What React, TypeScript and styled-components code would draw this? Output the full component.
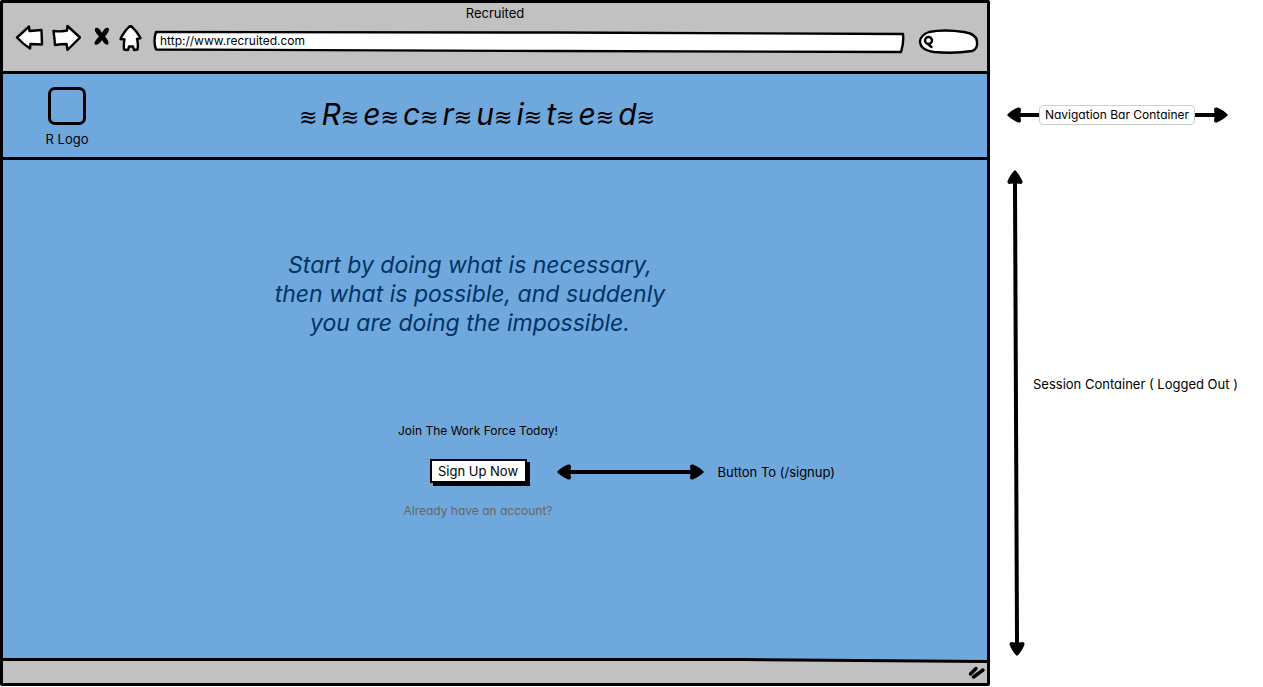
import React from "react";
import styled, { createGlobalStyle } from "styled-components";

const GlobalStyle = createGlobalStyle`
  * { box-sizing: border-box; }
  body {
    margin: 0;
    background: #fff;
    color: #000;
    font-family: Inter, "Liberation Sans", sans-serif;
    font-feature-settings: "cv11";
    font-size: 13px;
    line-height: 20px;
  }
`;

const Page = styled.div`
  display: grid;
  grid-template-columns: minmax(0, 1fr) 273px;
  min-height: 100vh;
`;

const BrowserWindow = styled.section`
  display: flex;
  flex-direction: column;
  margin-bottom: 1px;
  border: 3px solid #000;
  border-radius: 2px;
  background: #6fa8dc;
`;

const Chrome = styled.header`
  height: 71px;
  background: #c1c1c1;
  border-bottom: 3px solid #000;
`;

const WindowTitle = styled.div`
  text-align: center;
`;

const Toolbar = styled.div`
  display: flex;
  align-items: center;
  padding: 0 9px 0 12px;
`;

const IconButton = styled.button<{ $gap: number }>`
  display: flex;
  padding: 0;
  margin-right: ${(p) => p.$gap}px;
  border: 0;
  background: none;
  cursor: pointer;
`;

const Field = styled.div<{ $width?: number }>`
  position: relative;
  display: flex;
  height: 26px;
  margin-top: 6px;
  flex: ${(p) => (p.$width ? `0 0 ${p.$width}px` : "1 1 0")};
`;

const FieldFrame = styled.svg`
  position: absolute;
  inset: 0;
  width: 100%;
  height: 100%;
  overflow: visible;
`;

const FieldInput = styled.input<{ $indent: number }>`
  position: relative;
  width: 100%;
  min-width: 0;
  height: 22px;
  padding: 0 8px 0 ${(p) => p.$indent}px;
  border: 0;
  outline: 0;
  background: none;
  color: #000;
  font: inherit;
  font-size: 12px;
  font-feature-settings: inherit;
`;

const NavBar = styled.nav`
  display: flex;
  align-items: center;
  height: 86px;
  padding: 4px 124px 0 40px;
  border-bottom: 3px solid #000;
`;

const Logo = styled.a`
  display: flex;
  flex-direction: column;
  align-items: center;
  gap: 4px;
  width: 48px;
  color: #000;
  text-decoration: none;
  white-space: nowrap;
`;

const LogoBox = styled.span`
  width: 38px;
  height: 38px;
  border: 3px solid #000;
  border-radius: 7px;
`;

const Brand = styled.h1`
  flex: 1;
  margin: 0 0 8px;
  text-align: center;
  font-size: 30px;
  font-weight: 400;
  font-style: italic;
  line-height: 40px;
  white-space: nowrap;
`;

const Wave = styled.span`
  margin-right: 4px;
  font-family: "DejaVu Sans", sans-serif;
  font-size: 22px;
  font-style: normal;
  line-height: 20px;

  &:last-child {
    margin-right: 0;
  }
`;

const Main = styled.main`
  display: flex;
  flex: 1;
  flex-direction: column;
  align-items: center;
  padding: 91px 34px 40px 0;
`;

const Quote = styled.blockquote`
  margin: 0 16px 83px 0;
  color: #003366;
  font-size: 23px;
  font-style: italic;
  line-height: 29px;
  text-align: center;
`;

const Lead = styled.p`
  margin: 0 0 18px;
  font-size: 12px;
`;

const SignUpRow = styled.div`
  display: grid;
  grid-template-columns: 1fr auto 1fr;
  align-items: center;
  width: 100%;
  margin-bottom: 16px;
`;

const SignUpButton = styled.button`
  grid-column: 2;
  width: 97px;
  height: 24px;
  margin-bottom: 2px;
  padding: 0;
  border: 2px solid #000;
  background: #fff;
  box-shadow: 3px 3px 0 #000;
  color: #000;
  font: inherit;
  font-feature-settings: inherit;
  cursor: pointer;
`;

const Note = styled.div`
  display: flex;
  align-items: center;
  gap: 14px;
  padding-left: 30px;
  white-space: nowrap;
`;

const LoginLink = styled.a`
  color: #666;
  font-size: 12px;
  text-decoration: none;
`;

const StatusBar = styled.footer`
  position: relative;
  display: flex;
  justify-content: flex-end;
  align-items: center;
  height: 24px;
  padding: 4px 1px 0 0;
  background: #c1c1c1;
`;

const StatusEdge = styled.svg`
  position: absolute;
  left: 0;
  top: -2px;
  width: 100%;
  height: 8px;
`;

const Annotations = styled.aside`
  display: flex;
  flex-direction: column;
  padding: 0 35px 31px 17px;
  white-space: nowrap;
`;

const NavNote = styled.div`
  display: flex;
  align-items: center;
  margin: 105px 0 45px;
`;

const NavLabel = styled.span`
  width: 156px;
  height: 20px;
  border: 1px solid #ccc;
  border-radius: 4px;
  font-size: 12px;
  line-height: 18px;
  text-align: center;
`;

const SessionNote = styled.div`
  display: flex;
  flex: 1;
  gap: 8px;
`;

const SessionLabel = styled.span`
  align-self: center;
  padding-bottom: 58px;
`;

const ArrowBox = styled.span<{ $vertical?: boolean; $length?: number }>`
  display: flex;
  flex-direction: ${(p) => (p.$vertical ? "column" : "row")};
  flex: ${(p) => (p.$length ? `0 0 ${p.$length}px` : p.$vertical ? "none" : "1")};

  & > :last-child {
    align-self: flex-end;
  }
`;

const Shaft = styled.svg<{ $vertical?: boolean }>`
  flex: 1;
  min-width: 0;
  min-height: 0;
  width: ${(p) => (p.$vertical ? "18px" : "auto")};
  height: ${(p) => (p.$vertical ? "auto" : "16px")};
`;

const turns = { left: 0, up: 90, right: 180, down: 270 };

function Head({ to }: { to: keyof typeof turns }) {
  return (
    <svg width="16" height="16" viewBox="0 0 16 16" aria-hidden="true">
      <g transform={`rotate(${turns[to]} 8 8)`}>
        <path d="M0 8Q4 3.500 11 .6Q13.500 0 14 2L13.500 6H16V10H13.500L14 14Q13.500 16 11 15.400Q4 12.500 0 8Z" />
      </g>
    </svg>
  );
}

function Arrow({ vertical, length, start = true, end = true }: {
  vertical?: boolean; length?: number; start?: boolean; end?: boolean;
}) {
  return (
    <ArrowBox $vertical={vertical} $length={length}>
      {start && <Head to={vertical ? "up" : "left"} />}
      <Shaft
        $vertical={vertical}
        viewBox={vertical ? "0 0 18 16" : "0 0 16 16"}
        preserveAspectRatio="none"
        aria-hidden="true"
      >
        {vertical
          ? <path d="M6 0H10L12 16H8Z" />
          : <path d="M0 6H16V10H0Z" />}
      </Shaft>
      {end && <Head to={vertical ? "down" : "right"} />}
    </ArrowBox>
  );
}

const sketch = {
  fill: "#fff",
  stroke: "#000",
  strokeWidth: 2.4,
  strokeLinejoin: "round" as const,
  strokeLinecap: "round" as const,
};

export default function App() {
  return (
    <>
      <GlobalStyle />
      <Page>
        <BrowserWindow>
          <Chrome>
            <WindowTitle>Recruited</WindowTitle>
            <Toolbar>
              <IconButton $gap={8} aria-label="Back">
                <svg width="29" height="28" viewBox="0 0 29 28" {...sketch}>
                  <path d="M2 12.500L14 1.500L14.500 6L26.500 5L27 19.500L15.500 19L15 23.500Q8 19 2 12.500Z" />
                </svg>
              </IconButton>
              <IconButton $gap={12} aria-label="Forward">
                <svg width="29" height="28" viewBox="0 0 29 28" {...sketch}>
                  <path d="M1.500 6Q7 7 15 5.500L15.500 1L28 12.500L15.500 25L14.500 19Q9 19 3 20Q2.500 13 1.500 6Z" />
                </svg>
              </IconButton>
              <IconButton $gap={8} aria-label="Stop">
                <svg width="18" height="28" viewBox="0 0 18 28" fill="#000">
                  <path d="M2.500 3Q6 2 9 8Q12 1.500 15.500 3Q17.500 5 12 11.500Q17 17 15 19.500Q12 20.500 9 15Q5 21 2 19.500Q0 17.500 6 11.500Q0 5 2.500 3Z" />
                </svg>
              </IconButton>
              <IconButton $gap={10} aria-label="Home">
                <svg width="24" height="28" viewBox="0 0 24 28" {...sketch}>
                  <path d="M11.500 .5Q18 6 21.500 13L18 14Q19.500 19 18.500 24.500L15 25L14 21.500H10L9 25L5 24.500Q4.500 19 5.500 14.500L1.500 14Q5 6 11.500 .5Z" />
                </svg>
              </IconButton>
              <Field>
                <FieldFrame viewBox="0 0 750 26" preserveAspectRatio="none" aria-hidden="true" {...sketch}>
                  <path vectorEffect="non-scaling-stroke" d="M3 3L400 3.500L749 5Q750 14 747 23L400 22L3 20.500Q0 12 3 3Z" />
                </FieldFrame>
                <FieldInput $indent={7} aria-label="Address" defaultValue="http://www.recruited.com" />
              </Field>
              <Field $width={74}>
                <FieldFrame viewBox="-15 0 74 26" aria-hidden="true" {...sketch}>
                  <path d="M10 3Q25 0 45 3Q58 5 58 13Q59 20 53 22Q35 25 15 23Q1 21 1 12Q2 6 10 3Z" />
                  <circle cx="9.500" cy="11.500" r="3.500" />
                  <path d="M9 15L12.500 18" />
                </FieldFrame>
                <FieldInput $indent={30} type="search" aria-label="Search" />
              </Field>
            </Toolbar>
          </Chrome>
          <NavBar>
            <Logo href="#">
              <LogoBox />
              R Logo
            </Logo>
            <Brand aria-label="Recruited">
              <Wave>≋</Wave>
              {"Recruited".split("").map((letter, i) => (
                <React.Fragment key={i}>
                  {letter}
                  <Wave>≋</Wave>
                </React.Fragment>
              ))}
            </Brand>
          </NavBar>
          <Main>
            <Quote>
              Start by doing what is necessary,<br />
              then what is possible, and suddenly<br />
              you are doing the impossible.
            </Quote>
            <Lead>Join The Work Force Today!</Lead>
            <SignUpRow>
              <SignUpButton>Sign Up Now</SignUpButton>
              <Note>
                <Arrow length={147} />
                <span>Button To (/signup)</span>
              </Note>
            </SignUpRow>
            <LoginLink href="#">Already have an account?</LoginLink>
          </Main>
          <StatusBar>
            <StatusEdge viewBox="0 0 984 8" preserveAspectRatio="none" aria-hidden="true">
              <path fill="#6fa8dc" d="M0 0H984V5L740 3H0Z" />
              <path d="M0 1H740L984 3V6L740 4H0Z" />
            </StatusEdge>
            <svg width="18" height="16" viewBox="0 0 18 16" stroke="#000" strokeWidth="3.500" strokeLinecap="round" aria-hidden="true">
              <path d="M2.500 9L8 3.500M5.500 12L15 5" />
            </svg>
          </StatusBar>
        </BrowserWindow>
        <Annotations>
          <NavNote>
            <Arrow length={31} end={false} />
            <NavLabel>Navigation Bar Container</NavLabel>
            <Arrow start={false} />
          </NavNote>
          <SessionNote>
            <Arrow vertical />
            <SessionLabel>Session Container ( Logged Out )</SessionLabel>
          </SessionNote>
        </Annotations>
      </Page>
    </>
  );
}
